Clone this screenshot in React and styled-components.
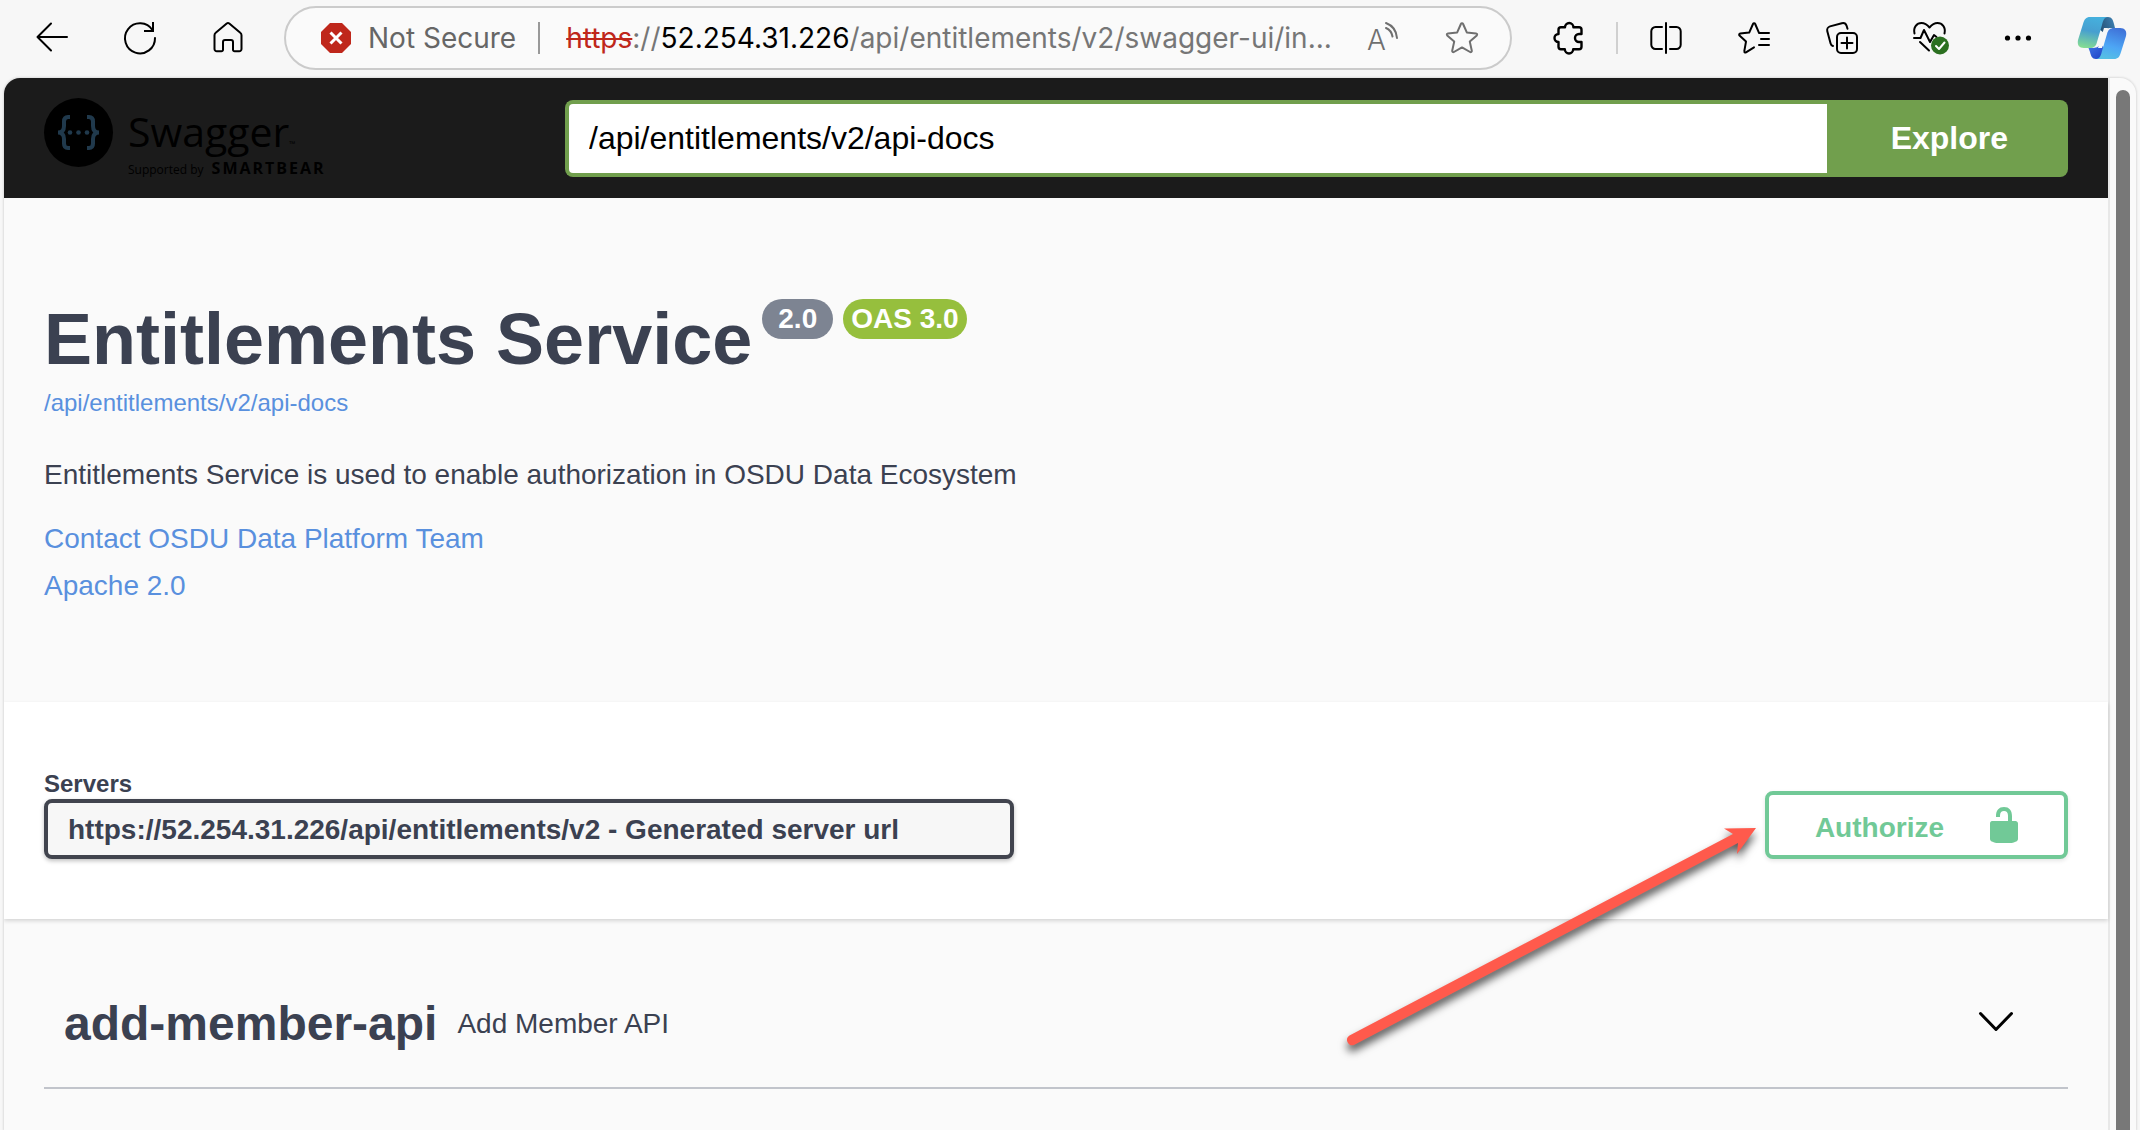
import React from "react";
import styled, { createGlobalStyle } from "styled-components";

const sans = '"Liberation Sans", Arial, Helvetica, sans-serif';
const ui = 'Inter, "Liberation Sans", sans-serif';
const ink = "#3b4151";
const link = "#5990de";
const green = "#719f4d";
const mint = "#71c997";

const GlobalStyle = createGlobalStyle`
  *, *::before, *::after { box-sizing: border-box; }
  body { margin: 0; background: #f7f7f7; font-family: ${sans}; color: ${ink}; }
  h1, h2, p { margin: 0; }
  a { text-decoration: none; }
  button { font: inherit; cursor: pointer; }
  svg { display: block; flex: none; overflow: visible; }
`;

const Window = styled.div`
  display: flex;
  flex-direction: column;
  height: 100vh;
  overflow: hidden;
`;

/* Browser toolbar */
const Toolbar = styled.header`
  display: flex;
  align-items: center;
  flex: none;
  height: 78px;
  padding: 0 0 2px 8px;
  font-family: ${ui};
`;

const ToolButton = styled.button`
  display: flex;
  align-items: center;
  justify-content: center;
  flex: none;
  width: ${(p) => (p.$compact ? 80 : 88)}px;
  height: 56px;
  padding: 0;
  border: 0;
  background: none;
  color: ${(p) => (p.$compact ? "#6f6f6f" : "#000")};
`;

const CopilotButton = styled(ToolButton)`
  width: 78px;
  padding-left: 2px;
`;

const AddressBar = styled.div`
  display: flex;
  align-items: center;
  flex: 1;
  min-width: 0;
  height: 64px;
  margin: 0 12px;
  padding: 0 8px 0 34px;
  border: 2px solid #cbcbcb;
  border-radius: 32px;
  background: #fafafa;
  font-size: 28px;
  line-height: 40px;
`;

const Security = styled.span`
  margin-left: 16px;
  color: #666;
  white-space: nowrap;
`;

const Divider = styled.span`
  flex: none;
  width: 2px;
  height: 32px;
  margin: ${(p) => (p.$wide ? "0 26px 0 22px" : "0 4px")};
  background: ${(p) => (p.$wide ? "#999" : "#d0d0d0")};
`;

const Url = styled.span`
  flex: 1;
  min-width: 0;
  overflow: hidden;
  white-space: nowrap;
  color: #767676;
`;

const Scheme = styled.s`
  color: #bf271b;
`;

const Host = styled.span`
  color: #000;
`;

/* Page viewport */
const Viewport = styled.div`
  display: flex;
  flex: 1;
  min-height: 0;
  margin: 0 4px;
  border-radius: 16px 16px 0 0;
  background: #fafafa;
  box-shadow: 0 0 2px 1px #dedede;
  overflow: hidden;
`;

const Page = styled.main`
  flex: 1;
  min-width: 0;
`;

const ScrollTrack = styled.div`
  flex: none;
  width: 28px;
  padding: 12px 6px 0;
  border-left: 2px solid #e8e8e8;
`;

const ScrollThumb = styled.div`
  width: 14px;
  height: 100%;
  border-radius: 7px 7px 0 0;
  background: #787878;
`;

const Topbar = styled.div`
  display: flex;
  align-items: center;
  height: 120px;
  padding: 0 40px;
  background: #1b1b1b;
`;

const Logo = styled.a`
  display: flex;
  align-items: flex-start;
  gap: 15px;
  flex: 0 0 521px;
  height: 80px;
  color: #000;
  font-family: "Open Sans", "Noto Sans", sans-serif;
`;

const Wordmark = styled.span`
  display: flex;
  flex-direction: column;
  padding-top: 4px;
`;

const Brand = styled.span`
  font-size: 41px;
  line-height: 58px;
  small { font-size: 8px; line-height: 8px; }
`;

const Supporter = styled.span`
  display: flex;
  align-items: baseline;
  gap: 8px;
  font-size: 12px;
  line-height: 16px;
  b { font-size: 16px; font-weight: 700; letter-spacing: 2px; }
`;

const ExploreForm = styled.form`
  display: flex;
  flex: 1;
  min-width: 0;
  height: 77px;
`;

const SpecInput = styled.input`
  flex: 1;
  min-width: 0;
  padding: 0 20px;
  border: 4px solid ${green};
  border-right: 0;
  border-radius: 8px 0 0 8px;
  background: #fff;
  color: #000;
  font: 32px ${sans};
  outline: 0;
`;

const ExploreButton = styled.button`
  padding: 0 60px 0 64px;
  border: 0;
  border-radius: 0 8px 8px 0;
  background: ${green};
  color: #fff;
  && { font: bold 32px ${sans}; }
`;

const Info = styled.section`
  display: flex;
  flex-direction: column;
  align-items: flex-start;
  padding: 101px 40px 96px;
  font-size: 28px;
  line-height: 40px;
`;

const TitleRow = styled.div`
  display: flex;
  gap: 10px;
`;

const Title = styled.h1`
  font-size: 72px;
  line-height: 80px;
`;

const Badge = styled.span`
  height: 40px;
  padding: 0 ${(p) => (p.$tight ? 8 : 16)}px;
  border-radius: 20px;
  background: ${(p) => (p.$tight ? "#96bf3d" : "#7d8492")};
  color: #fff;
  font-weight: bold;
`;

const SpecLink = styled.a`
  margin: 8px 0 36px;
  color: ${link};
  font-size: 24px;
  line-height: 32px;
`;

const InfoLinks = styled.div`
  display: flex;
  flex-direction: column;
  align-items: flex-start;
  gap: 7px;
  margin-top: 24px;
`;

const InfoLink = styled.a`
  color: ${link};
`;

const Schemes = styled.section`
  position: relative;
  z-index: 1;
  display: flex;
  align-items: flex-end;
  justify-content: space-between;
  gap: 40px;
  padding: 67px 40px 60px;
  background: #fff;
  box-shadow: 0 2px 4px rgba(0, 0, 0, 0.15);
`;

const ServerField = styled.div`
  display: flex;
  flex-direction: column;
  flex: 0 1 970px;
  min-width: 0;
`;

const ServerLabel = styled.label`
  font-size: 24px;
  font-weight: bold;
  line-height: 30px;
`;

const ServerSelect = styled.select`
  appearance: none;
  width: 100%;
  height: 60px;
  padding: 0 20px;
  border: 4px solid #41444e;
  border-radius: 8px;
  background: #f7f7f7;
  box-shadow: 0 2px 4px rgba(0, 0, 0, 0.25);
  color: ${ink};
  font: bold 28px ${sans};
`;

const AuthWrapper = styled.div`
  position: relative;
  flex: none;
`;

const AuthorizeButton = styled.button`
  display: flex;
  align-items: center;
  gap: 40px;
  height: 68px;
  padding: 0 40px 0 46px;
  border: 4px solid ${mint};
  border-radius: 8px;
  background: #fff;
  box-shadow: 0 2px 4px rgba(0, 0, 0, 0.1);
  color: ${mint};
  && { font: bold 28px/40px ${sans}; }
  span { padding-top: 6px; }
`;

const Pointer = styled.svg`
  position: absolute;
  top: 0;
  right: 100%;
  pointer-events: none;
  filter: drop-shadow(0 6px 4px rgba(0, 0, 0, 0.65));
`;

const Tags = styled.section`
  padding: 40px 40px 0;
`;

const TagRow = styled.div`
  display: flex;
  align-items: center;
  gap: 20px;
  padding: 37px 40px 35px 20px;
  border-bottom: 2px solid #c1c4cb;
`;

const TagName = styled.h2`
  font-size: 48px;
  line-height: 56px;
`;

const TagText = styled.p`
  flex: 1;
  font-size: 28px;
  line-height: 40px;
`;

const ExpandButton = styled.button`
  padding: 0 12px;
  border: 0;
  background: none;
  color: #000;
`;

const Icon = ({ children, size = 32 }) => (
  <svg
    width={size}
    height={size}
    viewBox="0 0 32 32"
    fill="none"
    stroke="currentColor"
    strokeWidth="2"
    strokeLinecap="round"
    strokeLinejoin="round"
    aria-hidden="true"
  >
    {children}
  </svg>
);

const BackIcon = () => (
  <Icon><path d="M31 15H1.5M15 1.5L1.5 15L15 28.5" /></Icon>
);

const ReloadIcon = () => (
  <Icon>
    <path d="M31 16A15 15 0 1 1 28.6 8.2" />
    <path d="M29 1V9H21" strokeLinecap="square" strokeLinejoin="miter" />
  </Icon>
);

const HomeIcon = () => (
  <Icon>
    <path d="M2.5 13.2c0-1 .4-1.9 1.2-2.5L14.7 1.6a2 2 0 0 1 2.6 0l11 9.1c.8.6 1.2 1.5 1.2 2.5V27a2.3 2.3 0 0 1-2.3 2.3h-4.6A1.6 1.6 0 0 1 21 27.700V20a2 2 0 0 0-2-2h-6a2 2 0 0 0-2 2v7.700A1.6 1.6 0 0 1 9.400 29.300H4.800A2.300 2.300 0 0 1 2.500 27Z" />
  </Icon>
);

const DangerIcon = () => (
  <svg width="32" height="32" viewBox="0 0 32 32" aria-hidden="true">
    <path d="M10 1h12l9 9v12l-9 9H10l-9-9V10Z" fill="#bf271b" />
    <path d="M10.500 10.500l11 11M21.500 10.500l-11 11" stroke="#fff" strokeWidth="3" />
  </svg>
);

const ReadAloudIcon = () => (
  <Icon>
    <text x="1" y="28" fontSize="28" fontWeight="300" fontFamily="Inter, sans-serif" fill="currentColor" stroke="none">A</text>
    <path d="M20 1c6.500 2.500 10.500 8 11 15M20 6c3.500 1.500 5.800 4.500 6.500 8.500" />
  </Icon>
);

const StarIcon = () => (
  <Icon>
    <path d="M14.900 2c.4-1 1.800-1 2.200 0l3.700 8.400 9.300 1c1 .1 1.400 1.300.7 2l-7 6.200 2 9.200c.2 1-.9 1.800-1.700 1.200L16 25.400 7.900 30c-.8.600-1.900-.2-1.700-1.200l2-9.200-7-6.200c-.7-.7-.3-1.900.7-2l9.300-1Z" />
  </Icon>
);

const PuzzleIcon = () => (
  <Icon>
    <path strokeWidth="2.400" d="M13 5.200a4.200 4.200 0 0 1 8.400 0H27a2.500 2.500 0 0 1 2.500 2.500V12H27a4 4 0 0 0 0 8h2.500v4.800a2.500 2.500 0 0 1-2.500 2.500h-5.800a4.200 4.200 0 0 1-8.400 0H9a2.500 2.500 0 0 1-2.500-2.500V20a4 4 0 0 1 0-8V7.700A2.500 2.500 0 0 1 9 5.200Z" />
  </Icon>
);

const SplitIcon = () => (
  <Icon>
    <path d="M16 1v30" />
    <path d="M12 5H5.500A4.200 4.200 0 0 0 1.300 9.200v13.600A4.200 4.200 0 0 0 5.500 27H12M20 5h6.500a4.200 4.200 0 0 1 4.200 4.200v13.600a4.200 4.200 0 0 1-4.200 4.200H20" />
  </Icon>
);

const FavoritesIcon = () => (
  <Icon>
    <path d="M21 10.800L17.200 2c-.4-1-1.800-1-2.200 0l-3.800 8.600-9 1c-1 .1-1.400 1.300-.7 2l6.500 6-1.700 9.600c-.2 1 .8 1.700 1.700 1.200L16 25.400M21 11h10M23 17h8M21 23h10" />
  </Icon>
);

const CollectionsIcon = () => (
  <Icon>
    <rect x="11" y="11" width="20" height="20" rx="4" />
    <path d="M21 15.500v11M15.500 21h11M21.500 6.800l-.9-3A4 4 0 0 0 15.800 1.200L4 4.400A4 4 0 0 0 1.300 9.200l3.300 12.200A3.800 3.800 0 0 0 7 24" />
  </Icon>
);

const HeartIcon = () => (
  <svg width="38" height="34" viewBox="0 0 38 34" fill="none" stroke="#000" strokeWidth="2" strokeLinecap="round" strokeLinejoin="round" aria-hidden="true">
    <path d="M3.500 12.500C2 6 6 2 10.500 2 14 2 16 3.500 18.500 6.500 21 3.500 23 2 26.500 2 31 2 35 6 33.500 12.500M3 17h6.500l3.500-8 6 12 4-7 2.500 2M9 21l9 8.500" />
    <circle cx="29" cy="24.500" r="9" fill="#2c7021" stroke="none" />
    <path d="M25 25l3 3 5.500-6.500" stroke="#fff" />
  </svg>
);

const MoreIcon = () => (
  <Icon>
    <g fill="currentColor" stroke="none">
      <circle cx="5.500" cy="16" r="2.600" />
      <circle cx="16" cy="16" r="2.600" />
      <circle cx="26.500" cy="16" r="2.600" />
    </g>
  </Icon>
);

const CopilotIcon = () => (
  <svg width="48" height="42" viewBox="0 0 48 42" aria-hidden="true">
    <defs>
      <linearGradient id="cpLeft" x1="0.500" y1="0" x2="0.300" y2="1">
        <stop offset="0" stopColor="#45b0dd" />
        <stop offset="0.450" stopColor="#479fd0" />
        <stop offset="1" stopColor="#84dc93" />
      </linearGradient>
      <linearGradient id="cpRight" x1="0.700" y1="0" x2="0.400" y2="1">
        <stop offset="0" stopColor="#3f72d8" />
        <stop offset="0.600" stopColor="#4da6f5" />
        <stop offset="1" stopColor="#55bfe4" />
      </linearGradient>
      <linearGradient id="cpTop" x1="0" y1="1" x2="1" y2="0.600">
        <stop offset="0" stopColor="#234a6b" />
        <stop offset="1" stopColor="#3b7bab" />
      </linearGradient>
      <linearGradient id="cpBottom" x1="0" y1="0" x2="1" y2="1">
        <stop offset="0" stopColor="#3f78e6" />
        <stop offset="1" stopColor="#1c3ec4" />
      </linearGradient>
    </defs>
    <path d="M25 0h5c4 0 5 3 6 7l1 4h-4c-4 0-6 2-7 5l-5-4Z" fill="url(#cpTop)" />
    <path d="M23 42h-5c-4 0-5-3-6-7l-1.500-4H14c4 0 7-1 8-4l5 4Z" fill="url(#cpBottom)" />
    <path d="M26 11h4l-6 20h-4Z" fill="#f7f7f7" />
    <path d="M12 0h18c-4 0-5 4-6 8l-5 17c-1 4-3 6-7 6H6c-5 0-7-3-6-8L5 7c1.500-5 3-7 7-7Z" fill="url(#cpLeft)" />
    <path d="M36 42H18c4 0 5-4 6-8l5-17c1-4 3-6 7-6h6c5 0 7 3 6 8l-5 16c-1.500 5-3 7-7 7Z" fill="url(#cpRight)" />
  </svg>
);

const SwaggerMark = () => (
  <svg width="69" height="69" viewBox="0 0 69 69" aria-hidden="true">
    <circle cx="34.500" cy="34.500" r="34.500" fill="#000" />
    <g fill="none" stroke="#20394c" strokeWidth="4">
      <path d="M26 19h-2c-3 0-4 1.500-4 4.500v4.500c0 4-1.500 6.500-6 6.500c4.500 0 6 2.500 6 6.500v4.500c0 3 1 4.500 4 4.500h2" />
      <path d="M43 19h2c3 0 4 1.500 4 4.500v4.500c0 4 1.500 6.500 6 6.500c-4.500 0-6 2.500-6 6.500v4.500c0 3-1 4.500-4 4.500h-2" />
    </g>
    <g fill="#20394c">
      <circle cx="26" cy="34.500" r="2.300" />
      <circle cx="34.500" cy="34.500" r="2.300" />
      <circle cx="43" cy="34.500" r="2.300" />
    </g>
  </svg>
);

const UnlockIcon = () => (
  <svg width="40" height="40" viewBox="0 0 20 20" fill="currentColor" aria-hidden="true">
    <path d="M15.800 8H14V5.600C14 2.703 12.665 1 10 1 7.334 1 6 2.703 6 5.600V6h2v-.801C8 3.754 8.797 3 10 3c1.203 0 2 .754 2 2.199V8H4c-.553 0-1 .646-1 1.199V17c0 .549.428 1.139.951 1.307l1.197.387C5.672 18.861 6.550 19 7.100 19h5.800c.549 0 1.428-.139 1.951-.307l1.196-.387c.524-.167.953-.757.953-1.306V9.199C17 8.646 16.352 8 15.800 8z" />
  </svg>
);

const ChevronIcon = () => (
  <svg width="40" height="40" viewBox="0 0 40 40" fill="none" stroke="currentColor" strokeWidth="3" strokeLinecap="round" strokeLinejoin="round" aria-hidden="true">
    <path d="M4.500 9.500L20 25.500L35.500 9.500" />
  </svg>
);

const ArrowPointer = () => (
  <Pointer width="425" height="270" viewBox="0 0 425 270" aria-hidden="true">
    <path d="M9.500 244.500L393 43L384 37.500L416 37L397 63L398 52L14 254A5.300 5.300 0 0 1 9.500 244.500Z" fill="#ff5a4c" />
  </Pointer>
);

const pageTools = [
  ["Split screen", SplitIcon],
  ["Favorites", FavoritesIcon],
  ["Collections", CollectionsIcon],
  ["Browser essentials", HeartIcon],
  ["Settings and more", MoreIcon],
];

const navTools = [
  ["Back", BackIcon],
  ["Refresh", ReloadIcon],
  ["Home", HomeIcon],
];

export default function App() {
  return (
    <Window>
      <GlobalStyle />
      <Toolbar>
        {navTools.map(([name, Glyph]) => (
          <ToolButton key={name} type="button" aria-label={name}><Glyph /></ToolButton>
        ))}
        <AddressBar>
          <DangerIcon />
          <Security>Not Secure</Security>
          <Divider $wide />
          <Url><Scheme>https</Scheme>://<Host>52.254.31.226</Host>/api/entitlements/v2/swagger-ui/in...</Url>
          <ToolButton $compact type="button" aria-label="Read aloud"><ReadAloudIcon /></ToolButton>
          <ToolButton $compact type="button" aria-label="Add to favorites"><StarIcon /></ToolButton>
        </AddressBar>
        <ToolButton type="button" aria-label="Extensions"><PuzzleIcon /></ToolButton>
        <Divider />
        {pageTools.map(([name, Glyph]) => (
          <ToolButton key={name} type="button" aria-label={name}><Glyph /></ToolButton>
        ))}
        <CopilotButton type="button" aria-label="Copilot"><CopilotIcon /></CopilotButton>
      </Toolbar>

      <Viewport>
        <Page>
          <Topbar>
            <Logo href="#">
              <SwaggerMark />
              <Wordmark>
                <Brand>Swagger<small>™</small></Brand>
                <Supporter>Supported by <b>SMARTBEAR</b></Supporter>
              </Wordmark>
            </Logo>
            <ExploreForm onSubmit={(e) => e.preventDefault()}>
              <SpecInput aria-label="API definition URL" defaultValue="/api/entitlements/v2/api-docs" />
              <ExploreButton type="submit">Explore</ExploreButton>
            </ExploreForm>
          </Topbar>

          <Info>
            <TitleRow>
              <Title>Entitlements Service</Title>
              <Badge>2.0</Badge>
              <Badge $tight>OAS 3.0</Badge>
            </TitleRow>
            <SpecLink href="#">/api/entitlements/v2/api-docs</SpecLink>
            <p>Entitlements Service is used to enable authorization in OSDU Data Ecosystem</p>
            <InfoLinks>
              <InfoLink href="#">Contact OSDU Data Platform Team</InfoLink>
              <InfoLink href="#">Apache 2.0</InfoLink>
            </InfoLinks>
          </Info>

          <Schemes>
            <ServerField>
              <ServerLabel htmlFor="servers">Servers</ServerLabel>
              <ServerSelect id="servers">
                <option>https://52.254.31.226/api/entitlements/v2 - Generated server url</option>
              </ServerSelect>
            </ServerField>
            <AuthWrapper>
              <AuthorizeButton type="button">
                <span>Authorize</span>
                <UnlockIcon />
              </AuthorizeButton>
              <ArrowPointer />
            </AuthWrapper>
          </Schemes>

          <Tags>
            <TagRow>
              <TagName>add-member-api</TagName>
              <TagText>Add Member API</TagText>
              <ExpandButton type="button" aria-label="Expand add-member-api"><ChevronIcon /></ExpandButton>
            </TagRow>
          </Tags>
        </Page>
        <ScrollTrack><ScrollThumb /></ScrollTrack>
      </Viewport>
    </Window>
  );
}
